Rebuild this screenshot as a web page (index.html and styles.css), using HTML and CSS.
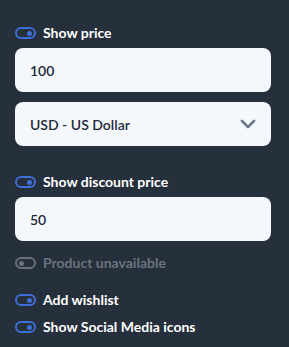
FILE: index.html
```html
<!DOCTYPE html>
<html>
<head>
<meta charset="utf-8">
<link rel="stylesheet" href="styles.css">
</head>
<body>
<div class="panel">
  <label class="toggle-row row-first">
    <span class="toggle on"><span class="knob"></span></span>
    <span class="label">Show price</span>
  </label>
  <div class="field">100</div>
  <div class="field select">
    <span>USD - US Dollar</span>
    <svg class="chev" width="16" height="10" viewBox="0 0 16 10"><path d="M2 2 L8 8 L14 2" fill="none" stroke="#6e7a88" stroke-width="2.6" stroke-linecap="round" stroke-linejoin="round"/></svg>
  </div>
  <label class="toggle-row row-discount">
    <span class="toggle on"><span class="knob"></span></span>
    <span class="label">Show discount price</span>
  </label>
  <div class="field">50</div>
  <label class="toggle-row row-unavail disabled">
    <span class="toggle off"><span class="knob"></span></span>
    <span class="label">Product unavailable</span>
  </label>
  <label class="toggle-row row-wish">
    <span class="toggle on"><span class="knob"></span></span>
    <span class="label">Add wishlist</span>
  </label>
  <label class="toggle-row row-social">
    <span class="toggle on"><span class="knob"></span></span>
    <span class="label">Show Social Media icons</span>
  </label>
</div>
</body>
</html>
```

FILE: styles.css
```css
html, body {
  margin: 0;
  padding: 0;
  background: #262f3c;
  height: 100%;
}
body {
  font-family: Lato, "Noto Sans", sans-serif;
}
.panel {
  width: 256px;
  padding: 0 0 0 15px;
  display: flex;
  flex-direction: column;
}
.toggle-row {
  display: flex;
  align-items: center;
  gap: 7px;
  height: 14px;
}
.row-first { margin-top: 26px; margin-bottom: 8px; }
.row-discount { margin-top: 19px; margin-bottom: 8px; }
.row-unavail { margin-top: 5px; }
.row-wish { margin-top: 23px; }
.row-social { margin-top: 13px; }
.toggle {
  box-sizing: border-box;
  width: 21px;
  height: 12px;
  border: 2px solid #3e6fd6;
  border-radius: 6px;
  display: flex;
  align-items: center;
  justify-content: flex-end;
  padding: 0 2px;
}
.knob {
  width: 5px;
  height: 5px;
  border-radius: 50%;
  background: #3e6fd6;
}
.toggle.off {
  border-color: #68717c;
  justify-content: flex-start;
}
.toggle.off .knob { background: #68717c; }
.label {
  color: #ffffff;
  font-weight: 700;
  font-size: 14px;
  line-height: 14px;
}
.disabled .label { color: #6a737e; }
.field {
  box-sizing: border-box;
  height: 44px;
  background: #f4f8fd;
  border-radius: 8px;
  padding: 0 15px;
  display: flex;
  align-items: center;
  color: #1e2a3a;
  font-size: 14px;
  font-weight: 600;
  margin-bottom: 10px;
}
.field.select {
  justify-content: space-between;
}
.chev {
  margin-right: 0px;
}
```
